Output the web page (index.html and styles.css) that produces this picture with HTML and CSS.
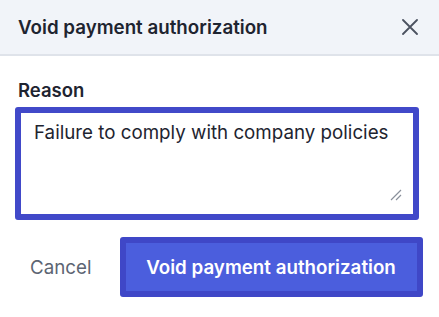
FILE: index.html
```html
<!DOCTYPE html>
<html>
<head>
<meta charset="utf-8">
<link rel="stylesheet" href="styles.css">
</head>
<body>
<div class="dialog">
  <header class="header">
    <h1 class="title">Void payment authorization</h1>
    <button class="close" aria-label="Close">
      <svg width="16" height="16" viewBox="0 0 16 16"><path d="M1 1L15 15M15 1L1 15" stroke="#4b5260" stroke-width="1.8" stroke-linecap="round" fill="none"/></svg>
    </button>
  </header>
  <div class="content">
    <label class="label">Reason</label>
    <div class="field">
      <div class="textarea">Failure to comply with company policies</div>
      <svg class="grip" width="12" height="12" viewBox="0 0 12 12"><path d="M1 11L11 1M6 11L11 6" stroke="#8a909b" stroke-width="1.2" fill="none"/></svg>
    </div>
  </div>
  <footer class="footer">
    <button class="cancel">Cancel</button>
    <button class="primary">Void payment authorization</button>
  </footer>
</div>
</body>
</html>
```
FILE: styles.css
```css
* { box-sizing: border-box; }
html, body { margin: 0; padding: 0; background: #fff; }
body { font-family: Inter, "Noto Sans", sans-serif; }
.dialog { width: 439px; }
.header {
  height: 56px;
  display: flex;
  align-items: center;
  justify-content: space-between;
  padding: 0 21px 0 18px;
  background: #f1f4f9;
  border-bottom: 2px solid #dfe3ea;
}
.title { margin: 0; font-size: 18.75px; font-weight: 600; color: #1e2430; letter-spacing: 0; }
.close { border: 0; background: none; padding: 0; display: flex; }
.content { padding: 22px 20px 0 15px; }
.label { display: block; margin-left: 3px; font-size: 18.5px; font-weight: 600; color: #1e2430; line-height: 24px; }
.field { position: relative; margin-top: 5px; }
.textarea {
  width: 404px;
  height: 113px;
  border: 6px solid #4149c9;
  border-radius: 3px;
  padding: 6px 13px;
  font-size: 18.75px;
  line-height: 27px;
  color: #1e2430;
}
.grip { position: absolute; right: 17px; bottom: 19px; }
.footer { display: flex; align-items: center; padding: 17px 0 0 30px; }
.cancel { border: 0; background: none; padding: 0; font-family: inherit; font-size: 18.75px; color: #5d6573; }
.primary {
  margin-left: 28px;
  width: 303px;
  height: 60px;
  border: 6px solid #3f47c7;
  border-radius: 3px;
  background: #4b5edd;
  color: #fff;
  font-family: inherit;
  font-size: 18.75px;
  font-weight: 600;
}
```
